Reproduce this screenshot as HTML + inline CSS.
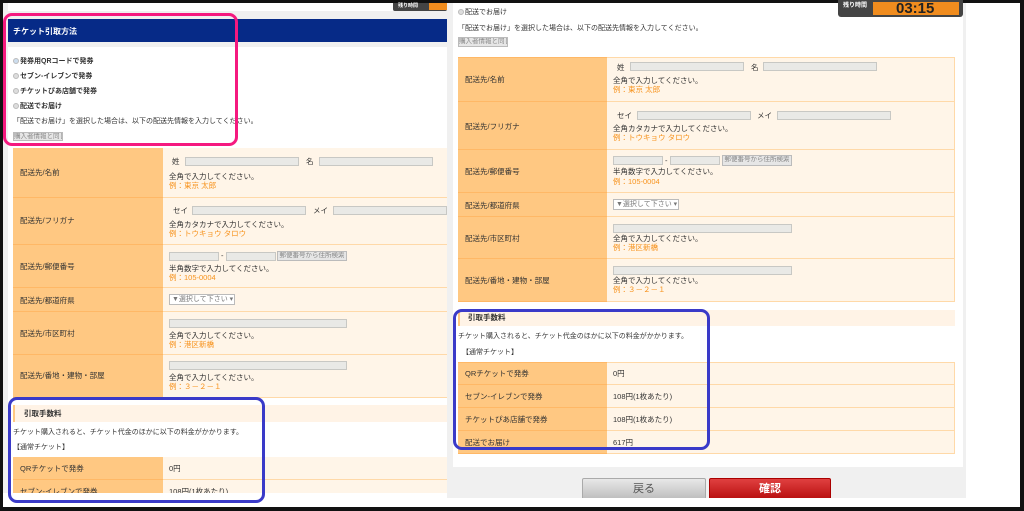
<!DOCTYPE html>
<html><head><meta charset="utf-8"><style>
*{margin:0;padding:0;box-sizing:border-box}
body{width:1024px;height:511px;background:#fff;position:relative;overflow:hidden;font-family:"Liberation Sans","Noto Sans CJK JP",sans-serif;font-size:7.5px;color:#333}
div,span{position:absolute}
.t{white-space:nowrap;line-height:9px}
.lab{background:#ffc882;border-bottom:1px solid #ffb866}
.val{background:#fff5e8;border-bottom:1px solid #ffd9a8}
.in{background:#e9e9e6;border:1px solid #c8c8c4;height:9px}
.ex{color:#f7931e}
.btn{background:#e6e6e6;border:1px solid #bbb;color:#888;text-align:center;line-height:8px;font-size:6.5px;white-space:nowrap;overflow:hidden}
.rad{width:6px;height:6px;border-radius:50%;background:#ddd;border:1px solid #bbb}
b{font-weight:bold}
</style></head><body>
<!-- frame -->
<div style="left:0;top:0;width:1024px;height:3px;background:#111"></div>
<div style="left:0;top:0;width:3px;height:511px;background:#111"></div>
<div style="left:0;top:507px;width:1024px;height:4px;background:#111"></div>
<div style="left:1020px;top:0;width:4px;height:511px;background:#111"></div>

<!-- LEFT PANEL -->
<div style="left:3px;top:3px;width:444px;height:504px;background:#f0f0f0"></div>
<div style="left:8px;top:3px;width:385px;height:8px;background:#fff"></div>
<div style="left:393px;top:3px;width:54px;height:8px;background:#444;border-radius:0 0 2px 2px"></div>
<div class="t" style="left:398px;top:2px;color:#fff;font-size:5px"><b>残り時間</b></div>
<div style="left:429px;top:3px;width:18px;height:7px;background:#f08c1e"></div>
<div style="left:8px;top:19px;width:439px;height:23px;background:#062a87"></div>
<div class="t" style="left:13px;top:27px;color:#fff;font-size:8px"><b>チケット引取方法</b></div>
<div style="left:8px;top:47px;width:439px;height:446px;background:#fff"></div>
<div class="rad" style="left:13px;top:58px;background:#cde"></div><div class="t" style="left:20px;top:57px;font-size:7px"><b>発券用QRコードで発券</b></div>
<div class="rad" style="left:13px;top:73px"></div><div class="t" style="left:20px;top:72px;font-size:7px"><b>セブン-イレブンで発券</b></div>
<div class="rad" style="left:13px;top:88px"></div><div class="t" style="left:20px;top:87px;font-size:7px"><b>チケットぴあ店舗で発券</b></div>
<div class="rad" style="left:13px;top:103px"></div><div class="t" style="left:20px;top:102px;font-size:7px"><b>配送でお届け</b></div>
<div class="t" style="left:13px;top:117px;font-size:7px">「配送でお届け」を選択した場合は、以下の配送先情報を入力してください。</div>
<div class="btn" style="left:13px;top:132px;width:50px;height:9px">購入者情報と同じ</div>

<div class="lab" style="left:13px;top:148px;width:150px;height:50px"></div><div class="val" style="left:163px;top:148px;width:284px;height:50px"></div>
<div class="lab" style="left:13px;top:198px;width:150px;height:47px"></div><div class="val" style="left:163px;top:198px;width:284px;height:47px"></div>
<div class="lab" style="left:13px;top:245px;width:150px;height:43px"></div><div class="val" style="left:163px;top:245px;width:284px;height:43px"></div>
<div class="lab" style="left:13px;top:288px;width:150px;height:24px"></div><div class="val" style="left:163px;top:288px;width:284px;height:24px"></div>
<div class="lab" style="left:13px;top:312px;width:150px;height:43px"></div><div class="val" style="left:163px;top:312px;width:284px;height:43px"></div>
<div class="lab" style="left:13px;top:355px;width:150px;height:43px"></div><div class="val" style="left:163px;top:355px;width:284px;height:43px"></div>
<div class="t" style="left:20px;top:168px">配送先/名前</div>
<div class="t" style="left:20px;top:216px">配送先/フリガナ</div>
<div class="t" style="left:20px;top:262px">配送先/郵便番号</div>
<div class="t" style="left:20px;top:296px">配送先/都道府県</div>
<div class="t" style="left:20px;top:329px">配送先/市区町村</div>
<div class="t" style="left:20px;top:371px">配送先/番地・建物・部屋</div>

<div class="t" style="left:172px;top:157px">姓</div><div class="in" style="left:185px;top:157px;width:114px"></div>
<div class="t" style="left:306px;top:157px">名</div><div class="in" style="left:319px;top:157px;width:114px"></div>
<div class="t" style="left:169px;top:172px">全角で入力してください。</div><div class="t ex" style="left:169px;top:181px">例：東京 太郎</div>
<div class="t" style="left:173px;top:206px">セイ</div><div class="in" style="left:192px;top:206px;width:114px"></div>
<div class="t" style="left:313px;top:206px">メイ</div><div class="in" style="left:333px;top:206px;width:114px"></div>
<div class="t" style="left:169px;top:220px">全角カタカナで入力してください。</div><div class="t ex" style="left:169px;top:229px">例：トウキョウ タロウ</div>
<div class="in" style="left:169px;top:252px;width:50px"></div><div class="t" style="left:221px;top:251px">-</div><div class="in" style="left:226px;top:252px;width:50px"></div>
<div class="btn" style="left:277px;top:251px;width:70px;height:10px">郵便番号から住所検索</div>
<div class="t" style="left:169px;top:264px">半角数字で入力してください。</div><div class="t ex" style="left:169px;top:273px">例：105-0004</div>
<div style="left:169px;top:294px;width:66px;height:11px;background:#fff;border:1px solid #bbb;color:#777;font-size:7px;line-height:9px;padding-left:2px;white-space:nowrap">▼選択して下さい ▾</div>
<div class="in" style="left:169px;top:319px;width:178px"></div>
<div class="t" style="left:169px;top:331px">全角で入力してください。</div><div class="t ex" style="left:169px;top:340px">例：港区新橋</div>
<div class="in" style="left:169px;top:361px;width:178px"></div>
<div class="t" style="left:169px;top:373px">全角で入力してください。</div><div class="t ex" style="left:169px;top:382px">例：３－２－１</div>

<div style="left:13px;top:405px;width:434px;height:17px;background:#fff3e6;border-left:2px solid #ffc882"></div>
<div class="t" style="left:24px;top:409px"><b>引取手数料</b></div>
<div class="t" style="left:13px;top:428px;font-size:7px">チケット購入されると、チケット代金のほかに以下の料金がかかります。</div>
<div class="t" style="left:13px;top:443px;font-size:7px">【通常チケット】</div>
<div class="lab" style="left:13px;top:457px;width:150px;height:23px"></div><div class="val" style="left:163px;top:457px;width:284px;height:23px"></div>
<div class="lab" style="left:13px;top:480px;width:150px;height:13px;border:0"></div><div class="val" style="left:163px;top:480px;width:284px;height:13px;border:0"></div>
<div class="t" style="left:20px;top:464px">QRチケットで発券</div><div class="t" style="left:169px;top:464px">0円</div>
<div class="t" style="left:20px;top:487px">セブン-イレブンで発券</div><div class="t" style="left:169px;top:487px">108円(1枚あたり)</div>
<div style="left:3px;top:493px;width:444px;height:14px;background:#fff"></div>

<!-- RIGHT PANEL -->
<div style="left:447px;top:3px;width:519px;height:504px;background:#f0f0f0"></div>
<div style="left:453px;top:3px;width:510px;height:464px;background:#fff"></div>
<div style="left:838px;top:0;width:125px;height:17px;background:#444;border-radius:0 0 3px 3px"></div>
<div class="t" style="left:843px;top:3px;color:#fff;font-size:6px;line-height:7px"><b>残り時間</b></div>
<div style="left:873px;top:2px;width:86px;height:13px;background:#f08c1e"></div>
<div class="t" style="left:896px;top:1px;font-size:15px;line-height:15px;color:#222"><b>03:15</b></div>
<div class="rad" style="left:458px;top:9px"></div><div class="t" style="left:465px;top:8px;font-size:7px">配送でお届け</div>
<div class="t" style="left:458px;top:24px;font-size:7px">「配送でお届け」を選択した場合は、以下の配送先情報を入力してください。</div>
<div class="btn" style="left:458px;top:37px;width:50px;height:10px">購入者情報と同じ</div>

<div class="lab" style="left:458px;top:57px;width:149px;height:45px;border-top:1px solid #ffb866"></div><div class="val" style="left:607px;top:57px;width:348px;height:45px;border-top:1px solid #ffd9a8;border-right:1px solid #ffd9a8"></div>
<div class="lab" style="left:458px;top:102px;width:149px;height:48px"></div><div class="val" style="left:607px;top:102px;width:348px;height:48px;border-right:1px solid #ffd9a8"></div>
<div class="lab" style="left:458px;top:150px;width:149px;height:43px"></div><div class="val" style="left:607px;top:150px;width:348px;height:43px;border-right:1px solid #ffd9a8"></div>
<div class="lab" style="left:458px;top:193px;width:149px;height:24px"></div><div class="val" style="left:607px;top:193px;width:348px;height:24px;border-right:1px solid #ffd9a8"></div>
<div class="lab" style="left:458px;top:217px;width:149px;height:42px"></div><div class="val" style="left:607px;top:217px;width:348px;height:42px;border-right:1px solid #ffd9a8"></div>
<div class="lab" style="left:458px;top:259px;width:149px;height:43px"></div><div class="val" style="left:607px;top:259px;width:348px;height:43px;border-right:1px solid #ffd9a8"></div>
<div class="t" style="left:465px;top:75px">配送先/名前</div>
<div class="t" style="left:465px;top:122px">配送先/フリガナ</div>
<div class="t" style="left:465px;top:167px">配送先/郵便番号</div>
<div class="t" style="left:465px;top:201px">配送先/都道府県</div>
<div class="t" style="left:465px;top:234px">配送先/市区町村</div>
<div class="t" style="left:465px;top:276px">配送先/番地・建物・部屋</div>

<div class="t" style="left:617px;top:63px">姓</div><div class="in" style="left:630px;top:62px;width:114px"></div>
<div class="t" style="left:751px;top:63px">名</div><div class="in" style="left:763px;top:62px;width:114px"></div>
<div class="t" style="left:613px;top:76px">全角で入力してください。</div><div class="t ex" style="left:613px;top:85px">例：東京 太郎</div>
<div class="t" style="left:617px;top:111px">セイ</div><div class="in" style="left:637px;top:111px;width:114px"></div>
<div class="t" style="left:757px;top:111px">メイ</div><div class="in" style="left:777px;top:111px;width:114px"></div>
<div class="t" style="left:613px;top:124px">全角カタカナで入力してください。</div><div class="t ex" style="left:613px;top:133px">例：トウキョウ タロウ</div>
<div class="in" style="left:613px;top:156px;width:50px"></div><div class="t" style="left:665px;top:156px">-</div><div class="in" style="left:670px;top:156px;width:50px"></div>
<div class="btn" style="left:722px;top:155px;width:70px;height:11px">郵便番号から住所検索</div>
<div class="t" style="left:613px;top:167px">半角数字で入力してください。</div><div class="t ex" style="left:613px;top:177px">例：105-0004</div>
<div style="left:613px;top:199px;width:66px;height:11px;background:#fff;border:1px solid #bbb;color:#777;font-size:7px;line-height:9px;padding-left:2px;white-space:nowrap">▼選択して下さい ▾</div>
<div class="in" style="left:613px;top:224px;width:179px"></div>
<div class="t" style="left:613px;top:234px">全角で入力してください。</div><div class="t ex" style="left:613px;top:243px">例：港区新橋</div>
<div class="in" style="left:613px;top:266px;width:179px"></div>
<div class="t" style="left:613px;top:276px">全角で入力してください。</div><div class="t ex" style="left:613px;top:285px">例：３－２－１</div>

<div style="left:458px;top:310px;width:497px;height:16px;background:#fff3e6;border-left:2px solid #ffc882"></div>
<div class="t" style="left:468px;top:313px"><b>引取手数料</b></div>
<div class="t" style="left:458px;top:332px;font-size:7px">チケット購入されると、チケット代金のほかに以下の料金がかかります。</div>
<div class="t" style="left:462px;top:348px;font-size:7px">【通常チケット】</div>
<div class="lab" style="left:458px;top:362px;width:149px;height:23px;border-top:1px solid #ffb866"></div><div class="val" style="left:607px;top:362px;width:348px;height:23px;border-top:1px solid #ffd9a8;border-right:1px solid #ffd9a8"></div>
<div class="lab" style="left:458px;top:385px;width:149px;height:23px"></div><div class="val" style="left:607px;top:385px;width:348px;height:23px;border-right:1px solid #ffd9a8"></div>
<div class="lab" style="left:458px;top:408px;width:149px;height:23px"></div><div class="val" style="left:607px;top:408px;width:348px;height:23px;border-right:1px solid #ffd9a8"></div>
<div class="lab" style="left:458px;top:431px;width:149px;height:23px"></div><div class="val" style="left:607px;top:431px;width:348px;height:23px;border-right:1px solid #ffd9a8"></div>
<div class="t" style="left:465px;top:369px">QRチケットで発券</div><div class="t" style="left:613px;top:369px">0円</div>
<div class="t" style="left:465px;top:392px">セブン-イレブンで発券</div><div class="t" style="left:613px;top:392px">108円(1枚あたり)</div>
<div class="t" style="left:465px;top:415px">チケットぴあ店舗で発券</div><div class="t" style="left:613px;top:415px">108円(1枚あたり)</div>
<div class="t" style="left:465px;top:438px">配送でお届け</div><div class="t" style="left:613px;top:438px">617円</div>

<div style="left:582px;top:478px;width:124px;height:22px;background:linear-gradient(#e8e8e8,#bdbdbd);border:1px solid #aaa;border-radius:2px;text-align:center;line-height:20px;font-size:11px;color:#555">戻る</div>
<div style="left:709px;top:478px;width:122px;height:22px;background:linear-gradient(#e04040,#b80f0f);border:1px solid #a00;border-radius:2px;text-align:center;line-height:20px;font-size:11px;color:#fff"><b>確認</b></div>
<div style="left:447px;top:498px;width:519px;height:9px;background:#fff"></div>

<!-- annotations -->
<div style="left:3px;top:13px;width:235px;height:133px;border:3px solid #f5197f;border-radius:9px"></div>
<div style="left:8px;top:397px;width:257px;height:106px;border:3px solid #3a3ac8;border-radius:9px"></div>
<div style="left:453px;top:309px;width:257px;height:141px;border:3px solid #3a3ac8;border-radius:9px"></div>
</body></html>
